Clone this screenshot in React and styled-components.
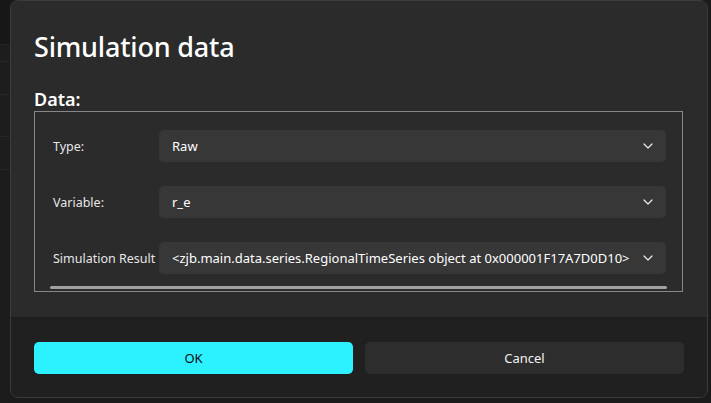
import React from "react";
import styled, { createGlobalStyle } from "styled-components";

const Global = createGlobalStyle`
  html, body { margin: 0; padding: 0; background: #1b1b1b; }
  body { width: 711px; height: 403px; overflow: hidden; font-family: "Noto Sans", "Open Sans", sans-serif; }
`;

const Screen = styled.div`
  display: flex;
  width: 711px;
  height: 403px;
  background: #1b1b1b;
`;

const SideStrip = styled.div`
  width: 10px;
  flex: none;
  display: flex;
  flex-direction: column;
`;

const StripRow = styled.div`
  height: ${(p) => p.$h}px;
  background: ${(p) => p.$bg};
  border-bottom: 1px solid #262626;
  flex: none;
`;

const Dialog = styled.div`
  width: 698px;
  height: 398px;
  box-sizing: border-box;
  border: 1px solid #3c3c3c;
  border-radius: 8px;
  overflow: hidden;
  display: flex;
  flex-direction: column;
  flex: none;
`;

const Body = styled.div`
  background: #2b2b2b;
  padding: 28px 24px 0 23px;
  display: flex;
  flex-direction: column;
  height: 316px;
  box-sizing: border-box;
`;

const Title = styled.h1`
  margin: 0;
  font-size: 27px;
  font-weight: 500;
  line-height: 36px;
  color: #ffffff;
  letter-spacing: -0.2px;
`;

const SectionLabel = styled.div`
  margin-top: 23px;
  margin-bottom: 1px;
  font-size: 18px;
  font-weight: 600;
  line-height: 22px;
  color: #ffffff;
`;

const Group = styled.div`
  border: 1px solid #888888;
  height: 181px;
  flex: none;
  box-sizing: border-box;
  padding: 18px 16px 0 18px;
  display: flex;
  flex-direction: column;
  gap: 24px;
`;

const Row = styled.div`
  display: flex;
  align-items: center;
  height: 32px;
`;

const Label = styled.div`
  width: 106px;
  flex: none;
  font-size: 12.5px;
  color: #e6e6e6;
  white-space: nowrap;
`;

const Combo = styled.div`
  flex: 1;
  height: 32px;
  box-sizing: border-box;
  background: #373737;
  border-radius: 5px;
  display: flex;
  align-items: center;
  padding: 0 13px 0 13px;
  color: #ffffff;
  font-size: 13px;
`;

const ComboText = styled.span`
  flex: 1;
  white-space: nowrap;
  overflow: hidden;
`;

const Scrollbar = styled.div`
  margin-top: -12px;
  margin-left: -3px;
  margin-right: -1px;
  height: 3px;
  border-radius: 2px;
  background: #a0a0a0;
`;

const Footer = styled.div`
  flex: 1;
  background: #202020;
  border-top: 1px solid #1c1c1c;
  display: flex;
  gap: 12px;
  padding: 24px 23px 0 23px;
`;

const Button = styled.button`
  width: 320px;
  height: 32px;
  border: none;
  border-radius: 5px;
  background: ${(p) => (p.$primary ? "#2cf2ff" : "#2d2d2d")};
  color: ${(p) => (p.$primary ? "#0c0c0c" : "#f2f2f2")};
  font-family: "Noto Sans", "Open Sans", sans-serif;
  font-size: 13px;
  cursor: pointer;
`;

const Chevron = () => (
  <svg width="10" height="6" viewBox="0 0 10 6" fill="none">
    <path d="M1 1 L5 5 L9 1" stroke="#e8e8e8" strokeWidth="1.2" strokeLinecap="round" strokeLinejoin="round" />
  </svg>
);

const rows = [
  { label: "Type:", value: "Raw" },
  { label: "Variable:", value: "r_e" },
  {
    label: "Simulation Result",
    value: "<zjb.main.data.series.RegionalTimeSeries object at 0x000001F17A7D0D10>",
  },
];

const strip = [
  { h: 44, bg: "#171717" },
  { h: 16, bg: "#1d1d1d" },
  { h: 32, bg: "#1d1d1d" },
  { h: 41, bg: "#1d1d1d" },
  { h: 32, bg: "#1d1d1d" },
  { h: 235, bg: "#1c1c1c" },
];

export default function App() {
  return (
    <>
      <Global />
      <Screen>
        <SideStrip>
          {strip.map((s, i) => (
            <StripRow key={i} $h={s.h} $bg={s.bg} />
          ))}
        </SideStrip>
        <Dialog>
          <Body>
            <Title>Simulation data</Title>
            <SectionLabel>Data:</SectionLabel>
            <Group>
              {rows.map((r) => (
                <Row key={r.label}>
                  <Label>{r.label}</Label>
                  <Combo>
                    <ComboText>{r.value}</ComboText>
                    <Chevron />
                  </Combo>
                </Row>
              ))}
              <Scrollbar />
            </Group>
          </Body>
          <Footer>
            <Button $primary>OK</Button>
            <Button>Cancel</Button>
          </Footer>
        </Dialog>
      </Screen>
    </>
  );
}
